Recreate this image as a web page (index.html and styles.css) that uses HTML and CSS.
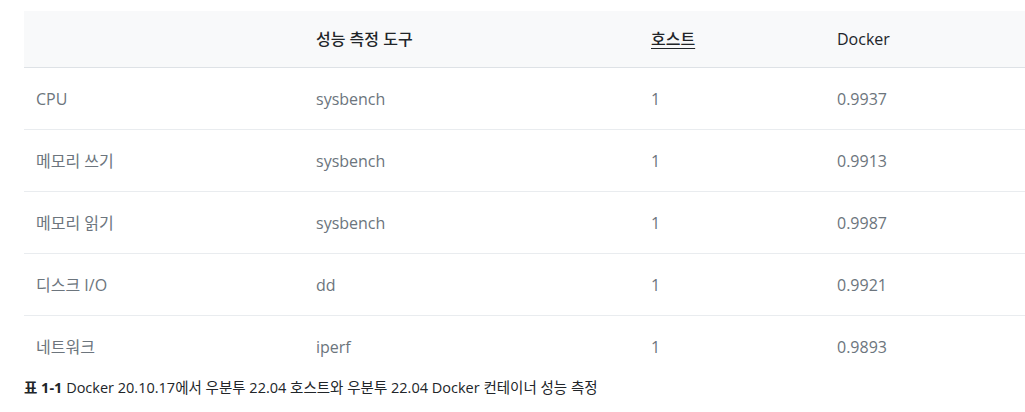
FILE: index.html
```html
<!DOCTYPE html>
<html lang="ko">
<head>
<meta charset="utf-8">
<link rel="stylesheet" href="styles.css">
</head>
<body>
<div class="page">
  <table class="perf">
    <thead>
      <tr>
        <th class="c1"></th>
        <th class="c2">성능 측정 도구</th>
        <th class="c3"><span class="ul">호스트</span></th>
        <th class="c4">Docker</th>
      </tr>
    </thead>
    <tbody>
      <tr><td>CPU</td><td>sysbench</td><td>1</td><td>0.9937</td></tr>
      <tr><td>메모리 쓰기</td><td>sysbench</td><td>1</td><td>0.9913</td></tr>
      <tr><td>메모리 읽기</td><td>sysbench</td><td>1</td><td>0.9987</td></tr>
      <tr><td>디스크 I/O</td><td>dd</td><td>1</td><td>0.9921</td></tr>
      <tr><td>네트워크</td><td>iperf</td><td>1</td><td>0.9893</td></tr>
    </tbody>
  </table>
  <p class="caption"><b>표 1-1</b> Docker 20.10.17에서 우분투 22.04 호스트와 우분투 22.04 Docker 컨테이너 성능 측정</p>
</div>
</body>
</html>
```
FILE: styles.css
```css
html, body {
  margin: 0;
  padding: 0;
  background: #fff;
  overflow: hidden;
}
.page {
  padding: 11px 0 0 24px;
  font-family: "Open Sans", "Noto Sans CJK KR", sans-serif;
}
.perf {
  border-collapse: collapse;
  width: 1040px;
  table-layout: fixed;
  font-size: 16px;
  line-height: 24px;
}
.perf th, .perf td {
  text-align: left;
  padding: 0 12px;
}
.perf th {
  height: 56px;
  background: #f8f9fa;
  color: #212529;
  font-weight: 500;
  border-bottom: 1px solid #dee2e6;
  padding-top: 0;
}
.perf td {
  height: 61px;
  color: #6c757d;
  border-bottom: 1px solid #e9ecef;
}
.perf tbody tr:last-child td {
  border-bottom: none;
  height: 62px;
}
.c1 { width: 256px; }
.c2 { width: 311px; }
.c3 { width: 162px; }
.ul {
  text-decoration: underline;
  text-decoration-thickness: 1px;
  text-underline-offset: 3px;
}
.caption {
  margin: 0;
  font-size: 14.5px;
  line-height: 20px;
  color: #212529;
}
.caption b { font-weight: 700; }
```
